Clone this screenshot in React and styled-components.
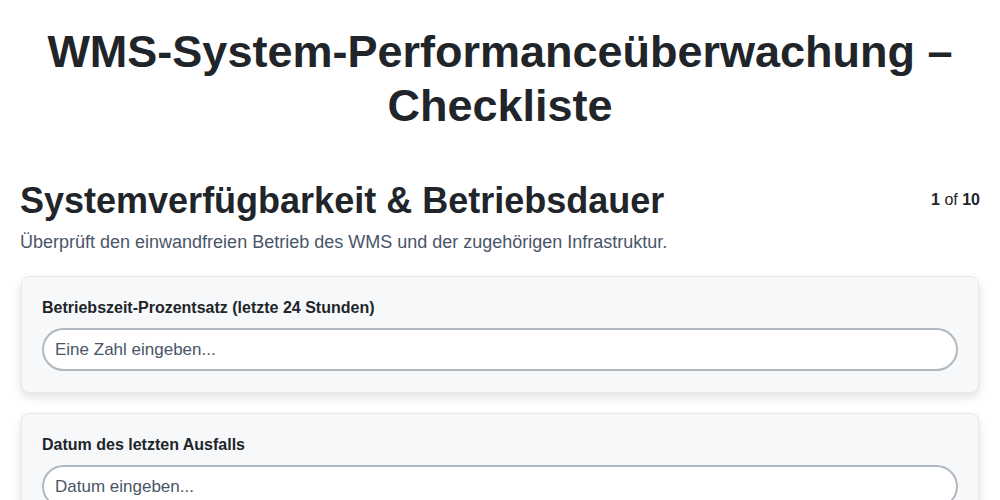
import styled, { createGlobalStyle } from "styled-components"

const GlobalStyle = createGlobalStyle`
    body {
        margin: 0;
        background: #ffffff;
        font-family: "Liberation Sans", Arial, sans-serif;
        color: #212529;
    }
`;

const Page = styled.div`
    padding: 25px 20px 20px;
`;
const PageTitle = styled.h1`
    margin: 0 0 46px;
    font-size: 45px;
    line-height: 1.2;
    font-weight: 700;
    text-align: center;
    color: #212529;
`;
const SectionHead = styled.div`
    display: flex;
    justify-content: space-between;
    align-items: flex-start;
`;
const SectionTitle = styled.h2`
    margin: 0;
    font-size: 36px;
    line-height: 1.2;
    font-weight: 700;
    color: #212529;
`;
const Counter = styled.div`
    font-size: 16px;
    margin-top: 12px;
    color: #212529;
    b {
        font-weight: 700;
    }
`;
const SectionDesc = styled.p`
    margin: 10px 0 23px;
    font-size: 18px;
    color: #4a5568;
`;
const Questions = styled.div`
    display: flex;
    flex-direction: column;
    gap: 20px;
    padding: 0 1px;
`;
const Card = styled.div`
    background: #f7f8fa;
    border: 1px solid #e6e8eb;
    border-radius: 8px;
    padding: 22px 20px 21px;
    box-shadow: 0 4px 10px rgba(0, 0, 0, 0.12);
`;
const Label = styled.label`
    display: block;
    font-size: 16px;
    font-weight: 700;
    color: #212529;
    margin-bottom: 11px;
`;
const Input = styled.input`
    box-sizing: border-box;
    width: 100%;
    height: 43px;
    padding: 0 11px;
    border: 2px solid #b1b8c0;
    border-radius: 22px;
    background: #ffffff;
    font-family: "Liberation Sans", Arial, sans-serif;
    font-size: 17px;
    color: #212529;
    outline: none;
    &::placeholder {
        color: #4a5568;
    }
`;

const questions = [
    { label: "Betriebszeit-Prozentsatz (letzte 24 Stunden)", placeholder: "Eine Zahl eingeben..." },
    { label: "Datum des letzten Ausfalls", placeholder: "Datum eingeben..." },
];

const App = () => {
    return (
        <Page>
            <GlobalStyle />
            <PageTitle>WMS-System-Performanceüberwachung – Checkliste</PageTitle>
            <SectionHead>
                <SectionTitle>Systemverfügbarkeit &amp; Betriebsdauer</SectionTitle>
                <Counter><b>1</b> of <b>10</b></Counter>
            </SectionHead>
            <SectionDesc>Überprüft den einwandfreien Betrieb des WMS und der zugehörigen Infrastruktur.</SectionDesc>
            <Questions>
                {questions.map((q) => (
                    <Card key={q.label}>
                        <Label>{q.label}</Label>
                        <Input type="text" placeholder={q.placeholder} />
                    </Card>
                ))}
            </Questions>
        </Page>
    )
}

export default App
